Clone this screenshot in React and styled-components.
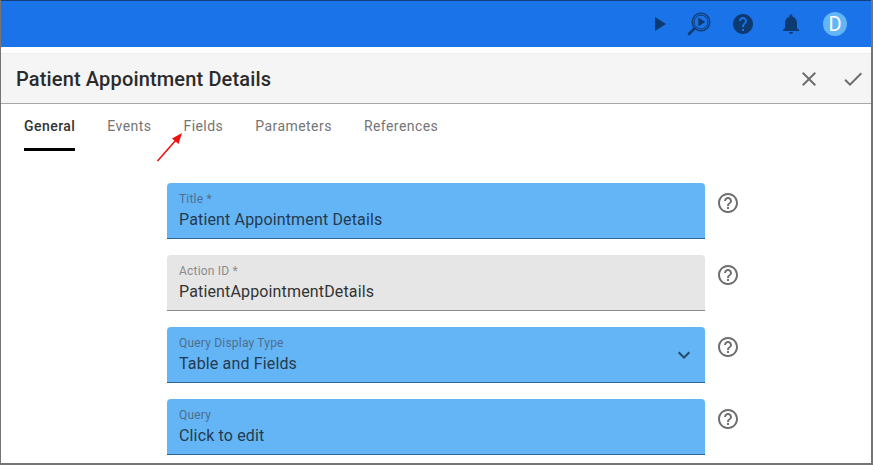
import React from "react";
import styled, { createGlobalStyle } from "styled-components";

const Global = createGlobalStyle`
  html, body { margin: 0; padding: 0; background: #fff; overflow: hidden; }
  * { box-sizing: border-box; }
`;

const Page = styled.div`
  width: 873px; height: 465px; position: relative; overflow: hidden;
  background: #fff; font-family: Roboto, "Liberation Sans", sans-serif;
  border-left: 1px solid #757575; border-right: 2px solid #757575; border-bottom: 2px solid #757575;
`;
const TopBar = styled.header`
  height: 47px; background: #1a73e8; border-top: 1px solid #123f7a;
  display: flex; align-items: center; justify-content: flex-end; padding: 0 24px 0 0;
`;
const BarIcon = styled.svg`
  width: 24px; height: 24px; fill: #0d3a70; flex: none; margin-left: ${p => p.$gap || 0}px; display: block;
`;
const Avatar = styled.div`
  width: 24px; height: 24px; border-radius: 50%; background: #64b5f6; color: #fff;
  margin-left: 20px; font-size: 20px; line-height: 24px; text-align: center;
`;
const TitleBar = styled.div`
  margin-top: 6px; height: 51px; background: #f5f5f5;
  border-top: 1px solid #eeeeee; border-bottom: 1px solid #a8a8a8;
  display: flex; align-items: center; padding: 0 6px 0 15px;
`;
const Heading = styled.h1`
  margin: 0; flex: 1; font-size: 20px; font-weight: 500; letter-spacing: 0.15px; color: #2b2b2b; line-height: 24px;
`;
const ActionIcon = styled.svg`
  width: 24px; height: 24px; fill: #6e6e6e; margin-left: 20px; display: block;
`;
const Tabs = styled.nav`
  display: flex; gap: 32px; padding-left: 23px; height: 48px;
`;
const Tab = styled.div`
  height: 47px; padding-top: 14px; font-size: 14px; line-height: 16px; letter-spacing: 0.45px;
  font-weight: ${p => (p.$active ? 500 : 400)};
  color: ${p => (p.$active ? "#333333" : "#757575")};
  border-bottom: 3px solid ${p => (p.$active ? "#000" : "transparent")};
`;
const Form = styled.div`
  padding: 31px 0 0 166px; display: flex; flex-direction: column; gap: 16px;
`;
const Row = styled.div`
  display: flex; align-items: flex-start; gap: 11px;
`;
const Field = styled.div`
  width: 538px; height: 56px; position: relative;
  background: ${p => (p.$disabled ? "#e6e6e6" : "#64b5f6")};
  border-radius: 4px 4px 0 0;
  border-bottom: 1px solid ${p => (p.$disabled ? "#8a8a8a" : "#2f6595")};
  padding: 10px 12px 0;
`;
const Label = styled.div`
  font-size: 12px; line-height: 12px; letter-spacing: 0.2px;
  color: ${p => (p.$disabled ? "#8c8c8c" : "#4c6f8e")};
`;
const Value = styled.div`
  margin-top: 4px; font-size: 16px; line-height: 22px; letter-spacing: 0.15px;
  color: ${p => (p.$disabled ? "#333333" : "#243a4e")};
`;
const Chevron = styled.svg`
  position: absolute; right: 9px; top: 16px; width: 24px; height: 24px; fill: #27496a;
`;
const HelpIcon = styled.svg`
  width: 24px; height: 24px; fill: #6e6e6e; margin-top: 8px; flex: none; display: block;
`;
const Annotation = styled.svg`
  position: absolute; left: 150px; top: 128px; width: 40px; height: 40px; overflow: visible;
`;

const P = {
  play: "M8 5v14l11-7z",
  help: "M12 2C6.48 2 2 6.48 2 12s4.48 10 10 10 10-4.48 10-10S17.52 2 12 2zm1 17h-2v-2h2v2zm2.07-7.75l-.9.92C13.45 12.9 13 13.5 13 15h-2v-.5c0-1.1.45-2.1 1.17-2.83l1.24-1.26c.37-.36.59-.86.59-1.41 0-1.1-.9-2-2-2s-2 .9-2 2H8c0-2.21 1.79-4 4-4s4 1.79 4 4c0 .88-.36 1.68-.93 2.25z",
  bell: "M12 22c1.1 0 2-.9 2-2h-4c0 1.1.89 2 2 2zm6-6v-5c0-3.07-1.64-5.64-4.5-6.32V4c0-.83-.67-1.5-1.5-1.5s-1.5.67-1.5 1.5v.68C7.63 5.36 6 7.92 6 11v5l-2 2v1h16v-1l-2-2z",
  close: "M19 6.41L17.59 5 12 10.59 6.41 5 5 6.41 10.59 12 5 17.59 6.41 19 12 13.41 17.59 19 19 17.59 13.41 12z",
  check: "M9 16.17L4.83 12l-1.42 1.41L9 19 21 7l-1.41-1.41z",
  expand: "M16.59 8.59L12 13.17 7.41 8.59 6 10l6 6 6-6z",
  helpOutline: "M11 18h2v-2h-2v2zm1-16C6.48 2 2 6.48 2 12s4.48 10 10 10 10-4.48 10-10S17.52 2 12 2zm0 18c-4.41 0-8-3.59-8-8s3.59-8 8-8 8 3.59 8 8-3.59 8-8 8zm0-14c-2.21 0-4 1.79-4 4h2c0-1.1.9-2 2-2s2 .9 2 2c0 2-3 1.75-3 5h2c0-2.25 3-2.5 3-5 0-2.21-1.79-4-4-4z",
};

const fields = [
  { label: "Title *", value: "Patient Appointment Details" },
  { label: "Action ID *", value: "PatientAppointmentDetails", disabled: true },
  { label: "Query Display Type", value: "Table and Fields", select: true },
  { label: "Query", value: "Click to edit" },
];

export default function App() {
  return (
    <Page>
      <Global />
      <TopBar>
        <BarIcon viewBox="0 0 24 24"><path d={P.play} /></BarIcon>
        <BarIcon viewBox="0 0 24 24" $gap={16}>
          <circle cx="14" cy="10" r="8.8" fill="none" stroke="#0d3a70" strokeWidth="1.3" />
          <circle cx="14" cy="10" r="6.9" fill="none" stroke="#0d3a70" strokeWidth="1" />
          <path d="M11.3 5.6v8.8l7-4.4z" />
          <path d="M7.6 16.4L2 22" fill="none" stroke="#0d3a70" strokeWidth="2.6" strokeLinecap="round" />
        </BarIcon>
        <BarIcon viewBox="0 0 24 24" $gap={20}><path d={P.help} /></BarIcon>
        <BarIcon viewBox="0 0 24 24" $gap={24}><path d={P.bell} /></BarIcon>
        <Avatar>D</Avatar>
      </TopBar>
      <TitleBar>
        <Heading>Patient Appointment Details</Heading>
        <ActionIcon viewBox="0 0 24 24"><path d={P.close} /></ActionIcon>
        <ActionIcon viewBox="0 0 24 24"><path d={P.check} /></ActionIcon>
      </TitleBar>
      <Tabs>
        <Tab $active>General</Tab>
        <Tab>Events</Tab>
        <Tab>Fields</Tab>
        <Tab>Parameters</Tab>
        <Tab>References</Tab>
      </Tabs>
      <Form>
        {fields.map(f => (
          <Row key={f.label}>
            <Field $disabled={f.disabled}>
              <Label $disabled={f.disabled}>{f.label}</Label>
              <Value $disabled={f.disabled}>{f.value}</Value>
              {f.select && <Chevron viewBox="0 0 24 24"><path d={P.expand} /></Chevron>}
            </Field>
            <HelpIcon viewBox="0 0 24 24"><path d={P.helpOutline} /></HelpIcon>
          </Row>
        ))}
      </Form>
      <Annotation viewBox="0 0 40 40">
        <path d="M6.5 33L25 12" stroke="#f01010" strokeWidth="1.6" fill="none" />
        <path d="M31 5L27.5 16 21 10.5z" fill="#f01010" />
      </Annotation>
    </Page>
  );
}
